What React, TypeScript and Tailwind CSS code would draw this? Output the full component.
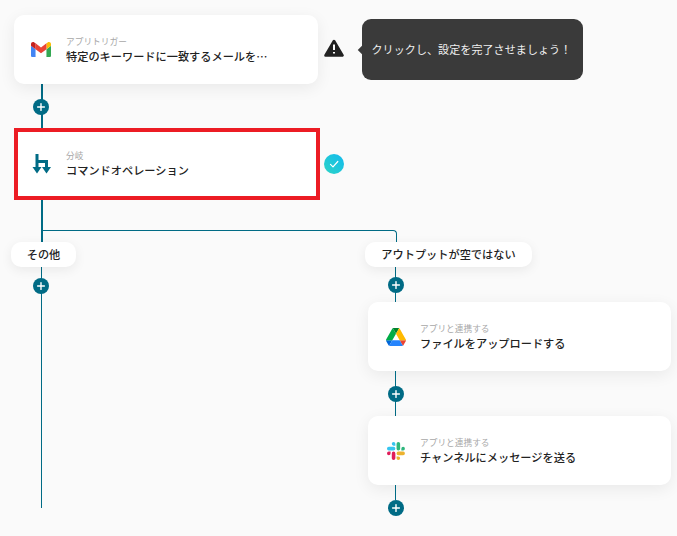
const font = "font-['Noto_Sans_CJK_JP','Noto_Sans',sans-serif]"

function Plus() {
    return (
        <div className="relative z-10 flex h-4 w-4 items-center justify-center rounded-full bg-[#006b85]">
            <svg width="10" height="10" viewBox="0 0 10 10" fill="none" stroke="#fff" strokeWidth="1.4" strokeLinecap="round">
                <path d="M5 1.6v6.8M1.6 5h6.8" />
            </svg>
        </div>
    )
}

function GmailIcon() {
    return (
        <svg width="20" height="15" viewBox="52 42 88 66">
            <path fill="#4285f4" d="M58 108h14V74L52 59v43c0 3.32 2.69 6 6 6" />
            <path fill="#34a853" d="M120 108h14c3.32 0 6-2.69 6-6V59l-20 15" />
            <path fill="#fbbc04" d="M120 48v26l20-15v-8c0-7.42-8.47-11.65-14.4-7.2" />
            <path fill="#ea4335" d="M72 74V48l24 18 24-18v26L96 92" />
            <path fill="#c5221f" d="M52 51v8l20 15V48l-5.6-4.2c-5.94-4.45-14.4-.22-14.4 7.2" />
        </svg>
    )
}

function BranchIcon() {
    return (
        <svg width="20" height="20" viewBox="32 154 20 20" fill="#006b85">
            <path d="M35.500 154h3v6h9.500v8h-3v-5h-6.500v5h-3z" />
            <path d="M32.500 167h9l-4.500 6.500z" />
            <path d="M42 167h9l-4.500 6.500z" />
        </svg>
    )
}

function DriveIcon() {
    return (
        <svg width="20" height="18" viewBox="0 0 87.3 78">
            <path d="m6.6 66.85 3.85 6.65c.8 1.4 1.95 2.5 3.3 3.3l13.75-23.8h-27.5c0 1.55.4 3.1 1.2 4.5z" fill="#0066da" />
            <path d="m43.65 25-13.75-23.8c-1.35.8-2.5 1.9-3.3 3.3l-25.4 44a9.06 9.06 0 0 0 -1.2 4.5h27.5z" fill="#00ac47" />
            <path d="m73.55 76.8c1.35-.8 2.5-1.9 3.3-3.3l1.6-2.75 7.65-13.25c.8-1.4 1.2-2.95 1.2-4.5h-27.502l5.852 11.5z" fill="#ea4335" />
            <path d="m43.65 25 13.75-23.8c-1.35-.8-2.9-1.2-4.5-1.2h-18.5c-1.6 0-3.15.45-4.5 1.2z" fill="#00832d" />
            <path d="m59.8 53h-32.3l-13.75 23.8c1.35.8 2.9 1.2 4.5 1.2h50.8c1.6 0 3.15-.45 4.5-1.2z" fill="#2684fc" />
            <path d="m73.4 26.5-12.7-22c-.8-1.4-1.95-2.5-3.3-3.3l-13.75 23.8 16.15 28h27.45c0-1.55-.4-3.1-1.2-4.5z" fill="#ffba00" />
        </svg>
    )
}

function SlackIcon() {
    return (
        <svg width="18" height="18" viewBox="0 0 54 54">
            <path fill="#36C5F0" d="M19.712.133a5.381 5.381 0 0 0-5.376 5.387 5.381 5.381 0 0 0 5.376 5.386h5.376V5.52A5.381 5.381 0 0 0 19.712.133m0 14.365H5.376A5.381 5.381 0 0 0 0 19.884a5.381 5.381 0 0 0 5.376 5.387h14.336a5.381 5.381 0 0 0 5.376-5.387 5.381 5.381 0 0 0-5.376-5.386" />
            <path fill="#2EB67D" d="M53.76 19.884a5.381 5.381 0 0 0-5.376-5.386 5.381 5.381 0 0 0-5.376 5.386v5.387h5.376a5.381 5.381 0 0 0 5.376-5.387m-14.336 0V5.52A5.381 5.381 0 0 0 34.048.133a5.381 5.381 0 0 0-5.376 5.387v14.364a5.381 5.381 0 0 0 5.376 5.387 5.381 5.381 0 0 0 5.376-5.387" />
            <path fill="#ECB22E" d="M34.048 54a5.381 5.381 0 0 0 5.376-5.387 5.381 5.381 0 0 0-5.376-5.386h-5.376v5.386A5.381 5.381 0 0 0 34.048 54m0-14.365h14.336a5.381 5.381 0 0 0 5.376-5.386 5.381 5.381 0 0 0-5.376-5.387H34.048a5.381 5.381 0 0 0-5.376 5.387 5.381 5.381 0 0 0 5.376 5.386" />
            <path fill="#E01E5A" d="M0 34.249a5.381 5.381 0 0 0 5.376 5.386 5.381 5.381 0 0 0 5.376-5.386v-5.387H5.376A5.381 5.381 0 0 0 0 34.25m14.336-.001v14.364A5.381 5.381 0 0 0 19.712 54a5.381 5.381 0 0 0 5.376-5.387V34.25a5.381 5.381 0 0 0-5.376-5.387 5.381 5.381 0 0 0-5.376 5.387" />
        </svg>
    )
}

function WarningIcon() {
    return (
        <svg width="20" height="18" viewBox="0 0 20 18">
            <path d="M10 2 18.500 16.500H1.500z" fill="#222" stroke="#222" strokeWidth="2.600" strokeLinejoin="round" />
            <path d="M10 5.500v5.500M10 13v1.600" stroke="#fff" strokeWidth="2" />
        </svg>
    )
}

function CheckBadge() {
    return (
        <div className="flex h-5 w-5 items-center justify-center rounded-full bg-gradient-to-tr from-[#2dd4c4] to-[#13b9ee]">
            <svg width="10" height="10" viewBox="0 0 10 10" fill="none" stroke="#fff" strokeWidth="1.200" strokeLinecap="round" strokeLinejoin="round">
                <path d="M1.500 5.300 4 7.800l4.800-5.300" />
            </svg>
        </div>
    )
}

function CardText({ label, title }: { label: string; title: string }) {
    return (
        <div className="min-w-0">
            <div className="mt-[1px] text-[8.700px] leading-[12px] text-[#a8a8a8]">{label}</div>
            <div className="text-[11.200px] leading-[17px] font-medium text-[#222]">{title}</div>
        </div>
    )
}

function Pill({ label, className }: { label: string; className: string }) {
    return (
        <div className={`relative z-10 flex h-[25px] items-center justify-center rounded-[10px] bg-white text-[11.200px] font-medium text-[#222] shadow-[0_3px_12px_rgba(0,0,0,0.07)] ${className}`}>
            {label}
        </div>
    )
}

export default function App() {
    return (
        <div className={`relative h-[536px] w-[677px] overflow-hidden bg-[#fafafa] pt-[15px] pl-[14px] ${font}`}>
            {/* trigger */}
            <div className="flex items-start">
                <div className="flex h-[69px] w-[304px] items-center gap-[15px] rounded-[10px] bg-white pl-[17px] shadow-[0_4px_16px_rgba(0,0,0,0.07)]">
                    <GmailIcon />
                    <CardText label="アプリトリガー" title="特定のキーワードに一致するメールを…" />
                </div>
                <div className="mt-[24px] ml-[6px]">
                    <WarningIcon />
                </div>
                <div className="relative mt-[4px] ml-[18px] flex h-[61px] w-[221px] items-center rounded-[9px] bg-[#3a3a3a] pl-[9.500px] text-[11px] tracking-[0.1px] text-[#f0f0f0]">
                    <div className="absolute top-[28px] left-[-3px] h-[6px] w-[6px] rotate-45 bg-[#3a3a3a]" />
                    クリックし、設定を完了させましょう！
                </div>
            </div>

            {/* connector */}
            <div className="ml-[27px] flex h-[44px] w-[2px] justify-center bg-[#006b85] pt-[15px]">
                <div className="mr-[2px] shrink-0"><Plus /></div>
            </div>

            {/* branch node */}
            <div className="flex items-center">
                <div className="flex h-[72px] w-[306px] items-center gap-[14px] border-[4px] border-[#ec1c24] bg-white pl-[14px]">
                    <BranchIcon />
                    <CardText label="分岐" title="コマンドオペレーション" />
                </div>
                <div className="ml-[4px]">
                    <CheckBadge />
                </div>
            </div>

            {/* branches */}
            <div className="relative flex">
                <div className="absolute top-[30px] left-[28px] h-[12px] w-[355px] rounded-tr-[4px] border-t border-r border-[#006b85]" />
                <div className="flex w-[351px] flex-col">
                    <div className="ml-[27px] h-[42px] w-[2px] bg-[#006b85]" />
                    <Pill label="その他" className="ml-[-3px] w-[65px]" />
                    <div className="ml-[27px] flex h-[241px] w-[1px] justify-center bg-[#006b85]">
                        <div className="mt-[11px] mr-[1px] shrink-0"><Plus /></div>
                    </div>
                </div>
                <div className="flex flex-col pt-[42px]">
                    <Pill label="アウトプットが空ではない" className="w-[167px]" />
                    <div className="ml-[30px] flex h-[35px] w-[1px] justify-center bg-[#006b85]">
                        <div className="mt-[10px] ml-[1px] shrink-0"><Plus /></div>
                    </div>
                    <div className="ml-[3px] flex h-[69px] w-[303px] items-center gap-[14px] rounded-[10px] bg-white pl-[18px] shadow-[0_4px_16px_rgba(0,0,0,0.07)]">
                        <DriveIcon />
                        <CardText label="アプリと連携する" title="ファイルをアップロードする" />
                    </div>
                    <div className="ml-[30px] flex h-[45px] w-[1px] justify-center bg-[#006b85]">
                        <div className="mt-[15px] ml-[1px] shrink-0"><Plus /></div>
                    </div>
                    <div className="ml-[3px] flex h-[69px] w-[303px] items-center gap-[15px] rounded-[10px] bg-white pl-[19px] shadow-[0_4px_16px_rgba(0,0,0,0.07)]">
                        <SlackIcon />
                        <CardText label="アプリと連携する" title="チャンネルにメッセージを送る" />
                    </div>
                    <div className="ml-[30px] flex h-[15px] w-[1px] justify-center bg-[#006b85]">
                        <div className="mt-[15px] ml-[1px] shrink-0"><Plus /></div>
                    </div>
                </div>
            </div>
        </div>
    )
}
